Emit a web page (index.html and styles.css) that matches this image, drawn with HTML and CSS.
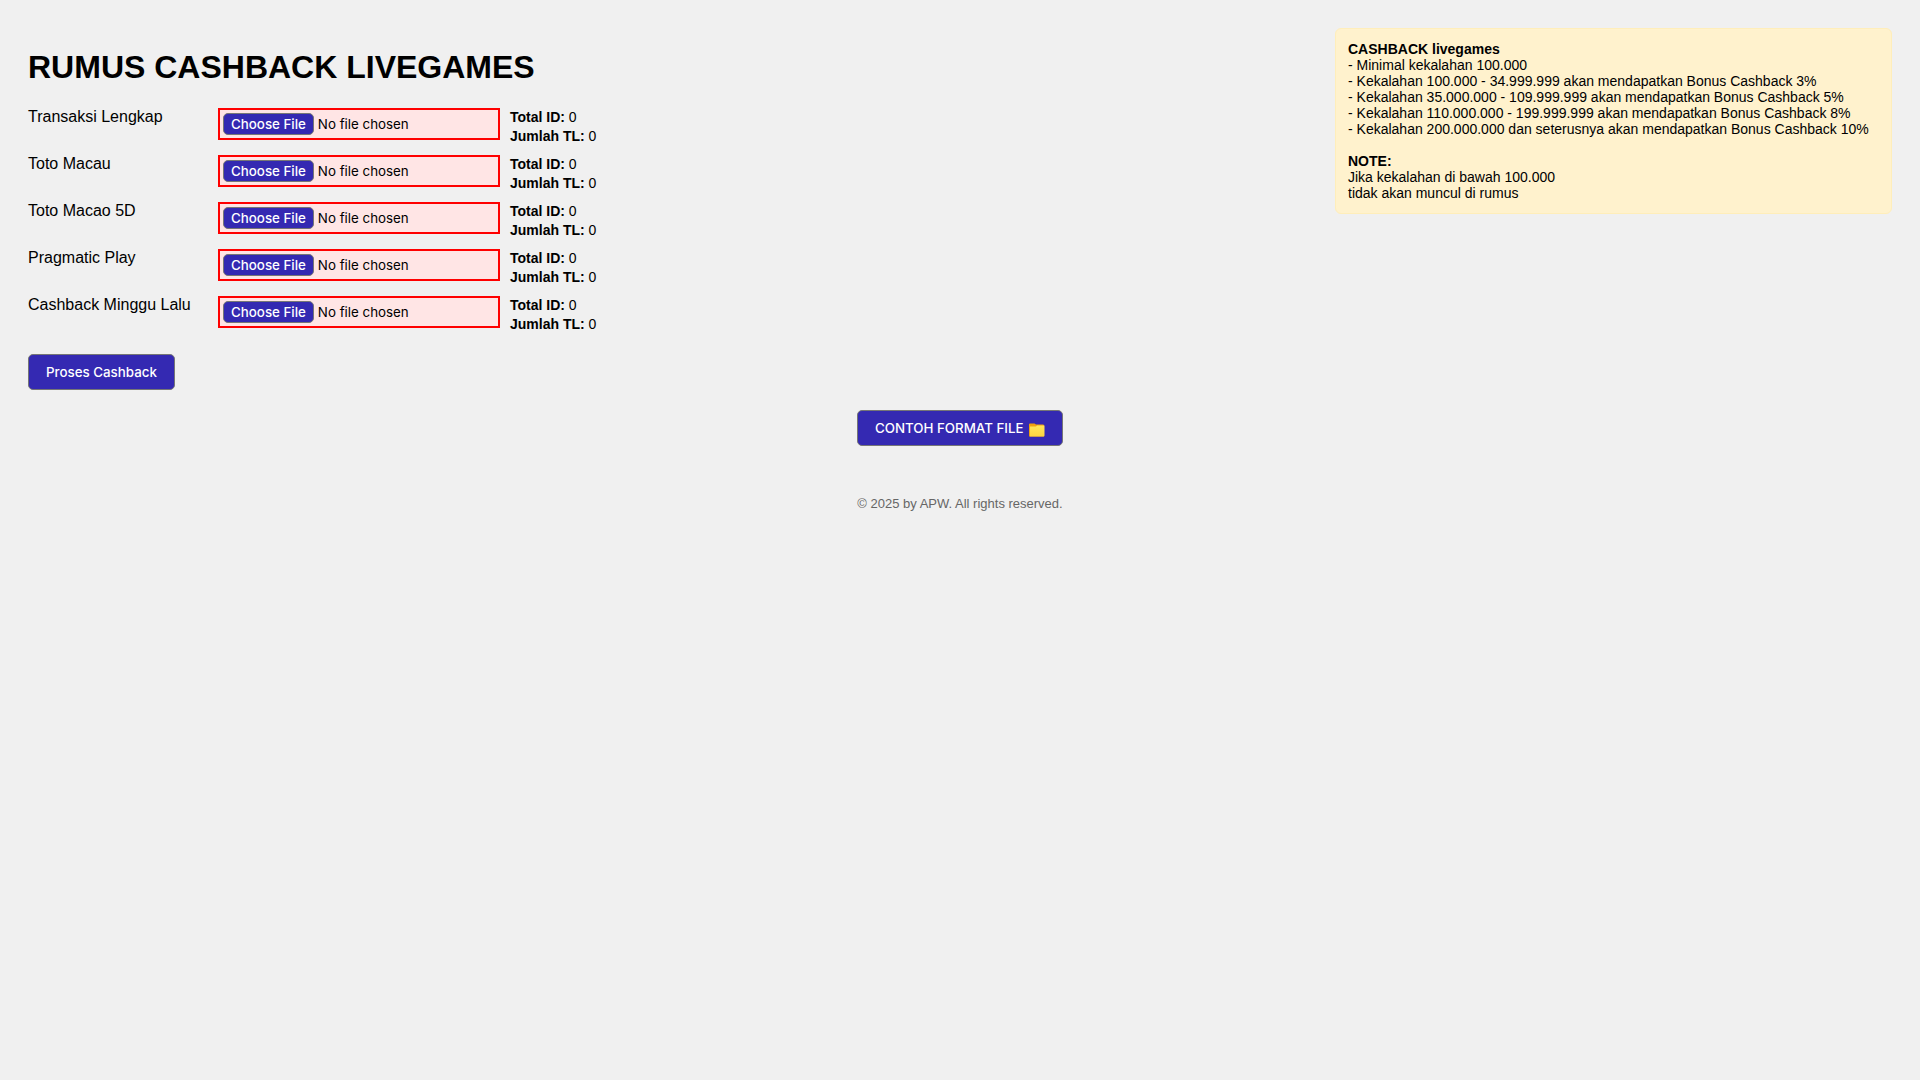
FILE: index.html
```html
<!DOCTYPE html>
<html lang="id">
<head>
<meta charset="utf-8">
<title>Rumus Cashback Livegames</title>
<link rel="stylesheet" href="styles.css">
</head>
<body>
<div class="top">
<main class="content">
<h1 class="title">RUMUS CASHBACK LIVEGAMES</h1>
<form class="form">
<div class="row"><label class="label" for="f1">Transaksi Lengkap</label><input class="file" type="file" id="f1"><div class="stats"><div><b>Total ID:</b> 0</div><div><b>Jumlah TL:</b> 0</div></div></div>
<div class="row"><label class="label" for="f2">Toto Macau</label><input class="file" type="file" id="f2"><div class="stats"><div><b>Total ID:</b> 0</div><div><b>Jumlah TL:</b> 0</div></div></div>
<div class="row"><label class="label" for="f3">Toto Macao 5D</label><input class="file" type="file" id="f3"><div class="stats"><div><b>Total ID:</b> 0</div><div><b>Jumlah TL:</b> 0</div></div></div>
<div class="row"><label class="label" for="f4">Pragmatic Play</label><input class="file" type="file" id="f4"><div class="stats"><div><b>Total ID:</b> 0</div><div><b>Jumlah TL:</b> 0</div></div></div>
<div class="row"><label class="label" for="f5">Cashback Minggu Lalu</label><input class="file" type="file" id="f5"><div class="stats"><div><b>Total ID:</b> 0</div><div><b>Jumlah TL:</b> 0</div></div></div>
<button class="button" type="button">Proses Cashback</button>
</form>
</main>
<aside class="note"><b>CASHBACK livegames</b><br>
- Minimal kekalahan 100.000<br>
- Kekalahan 100.000 - 34.999.999 akan mendapatkan Bonus Cashback 3%<br>
- Kekalahan 35.000.000 - 109.999.999 akan mendapatkan Bonus Cashback 5%<br>
- Kekalahan 110.000.000 - 199.999.999 akan mendapatkan Bonus Cashback 8%<br>
- Kekalahan 200.000.000 dan seterusnya akan mendapatkan Bonus Cashback 10%<br>
<br>
<b>NOTE:</b><br>
Jika kekalahan di bawah 100.000<br>
tidak akan muncul di rumus</aside>
</div>
<div class="sample"><button class="button" type="button">CONTOH FORMAT FILE
<svg class="folder" viewBox="0 0 16 14" aria-hidden="true"><defs><linearGradient id="front" x1="0" y1="0" x2="0" y2="1"><stop offset="0" stop-color="#ffe65a"/><stop offset="1" stop-color="#fcd440"/></linearGradient></defs><path d="M0 1.5Q0 .5 1 .5H5.5L7 1.5H14Q15 1.5 15 2.5V13.5H0Z" fill="#f0a010"/><path d="M1 3.5H7L8 2.5H15.5V12.5Q15.5 13.5 14.5 13.5H1Z" fill="url(#front)"/></svg></button></div>
<footer class="footer">© 2025 by APW. All rights reserved.</footer>
</body>
</html>
```

FILE: styles.css
```css
body {
  margin: 0;
  padding: 28px;
  background: #f0f0f0;
  color: #000;
  font-family: "Liberation Sans", Arial, sans-serif;
  font-size: 16px;
}
.top {
  display: flex;
  justify-content: space-between;
  align-items: flex-start;
}
.title {
  margin: 21px 0 22px;
  font-size: 32px;
  line-height: 37px;
}
.row {
  display: flex;
  align-items: flex-start;
  margin-bottom: 9px;
}
.label {
  width: 190px;
}
.file {
  box-sizing: border-box;
  width: 282px;
  height: 32px;
  padding: 3px;
  border: 2px solid #f00;
  background: #ffe5e5;
  font-family: Inter, sans-serif;
}
.file::file-selector-button,
.button {
  border: 1px solid #767676;
  border-radius: 5px;
  background: #3429b2;
  color: #fff;
  font-family: Inter, sans-serif;
  font-weight: 500;
}
.file::file-selector-button {
  height: 22px;
  padding: 0 7px;
}
.stats {
  margin-left: 10px;
  font-size: 14px;
  line-height: 19px;
}
.button {
  height: 36px;
  padding: 0 17px;
}
.form .button {
  margin-top: 11px;
}
.note {
  box-sizing: border-box;
  min-width: 557px;
  padding: 12px;
  border: 1px solid #ffeeba;
  border-radius: 6px;
  background: #fff2cd;
  font-size: 14px;
  line-height: 16px;
}
.sample {
  margin-top: 20px;
  text-align: center;
}
.folder {
  width: 16px;
  height: 14px;
  margin-left: 2px;
  vertical-align: -4px;
}
.footer {
  margin-top: 50px;
  text-align: center;
  color: #666;
  font-size: 13px;
}
```
